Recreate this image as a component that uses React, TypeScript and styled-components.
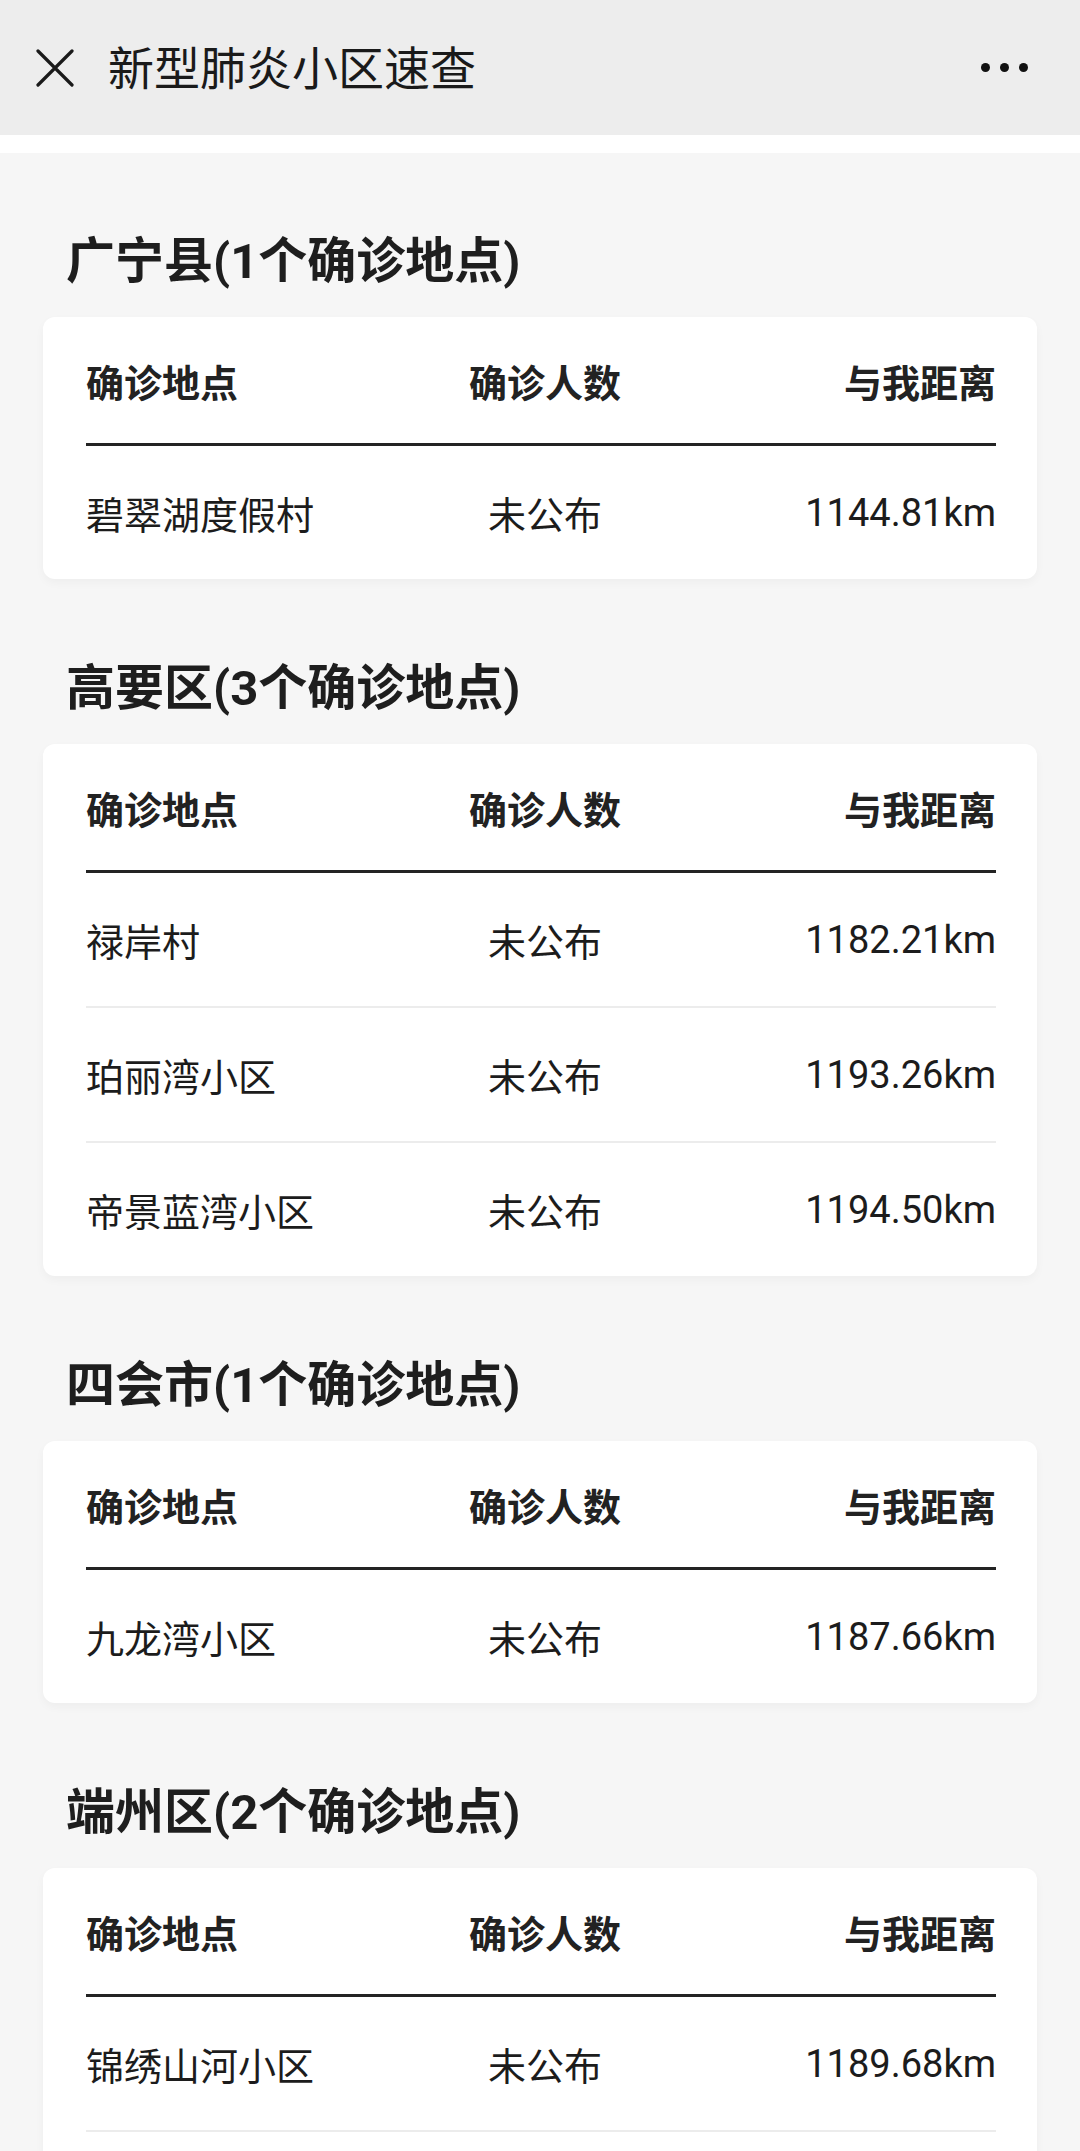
import styled, { createGlobalStyle } from 'styled-components';

const GlobalStyle = createGlobalStyle`
  html, body {
    margin: 0;
    padding: 0;
    background-color: #f6f6f6;
  }
  body {
    font-family: Roboto, "Noto Sans CJK SC", "Noto Sans", sans-serif;
    color: #1c1c1c;
  }
`;

type Place = { name: string; count: string; distance: string };
type District = { name: string; total: number; places: Place[] };

const districts: District[] = [
  {
    name: '广宁县',
    total: 1,
    places: [{ name: '碧翠湖度假村', count: '未公布', distance: '1144.81km' }]
  },
  {
    name: '高要区',
    total: 3,
    places: [
      { name: '禄岸村', count: '未公布', distance: '1182.21km' },
      { name: '珀丽湾小区', count: '未公布', distance: '1193.26km' },
      { name: '帝景蓝湾小区', count: '未公布', distance: '1194.50km' }
    ]
  },
  {
    name: '四会市',
    total: 1,
    places: [{ name: '九龙湾小区', count: '未公布', distance: '1187.66km' }]
  },
  {
    name: '端州区',
    total: 2,
    places: [
      { name: '锦绣山河小区', count: '未公布', distance: '1189.68km' },
      // second row is below the fold in the screenshot
      { name: '', count: '', distance: '' }
    ]
  }
];

const Page = styled.div`
  min-height: 100vh;
`;

const NavBar = styled.div`
  height: 135px;
  background-color: #ededed;
  display: flex;
  align-items: center;
  padding: 0 0 0 36px;
  box-sizing: border-box;
`;

const CloseButton = styled.svg`
  width: 38px;
  height: 38px;
  flex-shrink: 0;
`;

const NavTitle = styled.div`
  margin-left: 34px;
  font-size: 46px;
  line-height: 1;
  color: #1a1a1a;
  flex: 1;
  padding-top: 2px;
`;

const MoreButton = styled.div`
  display: flex;
  gap: 10px;
  margin-right: 52px;
`;

const Dot = styled.span`
  width: 9px;
  height: 9px;
  border-radius: 50%;
  background-color: #111;
`;

const Strip = styled.div`
  height: 18px;
  background-color: #ffffff;
`;

const Content = styled.div`
  padding: 80px 43px 0;
`;

const Section = styled.section`
  & + & {
    margin-top: 81px;
  }
`;

const SectionTitle = styled.h2`
  margin: 0 0 26px 23px;
  font-size: 49px;
  line-height: 58px;
  font-weight: 700;
  color: #1e1e1e;
`;

const Card = styled.div`
  background-color: #ffffff;
  border-radius: 12px;
  box-shadow: 0 4px 10px rgba(0, 0, 0, 0.035);
  padding: 0 41px 0 43px;
`;

const Row = styled.div`
  display: grid;
  grid-template-columns: 1fr 1fr 1fr;
  align-items: center;
  height: 133px;
  font-size: 38px;
  font-weight: 400;
  color: #1c1c1c;

  & + & {
    border-top: 2px solid #ececec;
  }
`;

const HeadRow = styled(Row)`
  height: 126px;
  font-weight: 700;
  color: #222;
  border-bottom: 3px solid #232323;

  & + ${Row} {
    border-top: none;
  }
`;

const Cell = styled.div<{ $align: 'left' | 'center' | 'right' }>`
  text-align: ${p => p.$align};
  white-space: nowrap;
  padding-left: ${p => (p.$align === 'center' ? '8px' : '0')};
`;

const App = () => {
  return (
    <Page>
      <GlobalStyle />
      <NavBar>
        <CloseButton viewBox="0 0 38 38">
          <path d="M2 2 L36 36 M36 2 L2 36" stroke="#1a1a1a" strokeWidth="3.2" strokeLinecap="round" />
        </CloseButton>
        <NavTitle>新型肺炎小区速查</NavTitle>
        <MoreButton>
          <Dot />
          <Dot />
          <Dot />
        </MoreButton>
      </NavBar>
      <Strip />
      <Content>
        {districts.map(d => (
          <Section key={d.name}>
            <SectionTitle>
              {d.name}({d.total}个确诊地点)
            </SectionTitle>
            <Card>
              <HeadRow>
                <Cell $align="left">确诊地点</Cell>
                <Cell $align="center">确诊人数</Cell>
                <Cell $align="right">与我距离</Cell>
              </HeadRow>
              {d.places.map((p, i) => (
                <Row key={i}>
                  <Cell $align="left">{p.name}</Cell>
                  <Cell $align="center">{p.count}</Cell>
                  <Cell $align="right">{p.distance}</Cell>
                </Row>
              ))}
            </Card>
          </Section>
        ))}
      </Content>
    </Page>
  );
};

export default App;
